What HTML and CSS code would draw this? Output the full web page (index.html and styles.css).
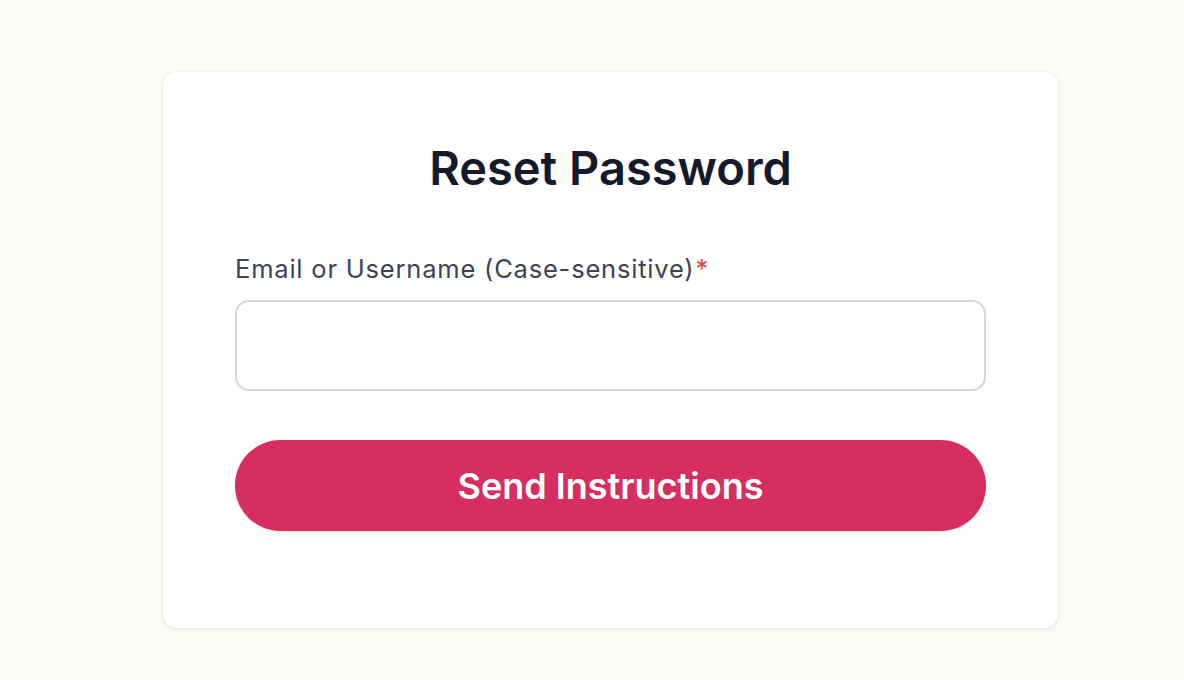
FILE: index.html
```html
<!DOCTYPE html>
<html lang="en">
<head>
<meta charset="utf-8">
<title>Reset Password</title>
<link rel="stylesheet" href="styles.css">
</head>
<body>
<main class="page">
  <section class="card">
    <h1 class="title">Reset Password</h1>
    <form class="form">
      <label class="label" for="user">Email or Username (Case-sensitive)<span class="req">*</span></label>
      <input class="input" id="user" type="text">
      <button class="btn" type="button">Send Instructions</button>
    </form>
  </section>
</main>
</body>
</html>
```
FILE: styles.css
```css
html, body {
  margin: 0;
  padding: 0;
  background: #fcfdf0;
  font-family: Inter, "Liberation Sans", sans-serif;
}
.page {
  padding: 72px 0 0 163px;
  min-height: 680px;
  box-sizing: border-box;
}
.card {
  width: 895px;
  height: 556px;
  box-sizing: border-box;
  background: #fff;
  border-radius: 14px;
  box-shadow: 0 1px 4px rgba(0,0,0,0.12);
  padding: 66px 72px 0;
}
.title {
  margin: 0;
  text-align: center;
  font-size: 47px;
  font-weight: 600;
  color: #141a2b;
  line-height: 60px;
}
.form {
  display: flex;
  flex-direction: column;
  margin-top: 55px;
}
.label {
  font-size: 25.5px;
  color: #3b4356;
  line-height: 32px;
  letter-spacing: 0.8px;
}
.req { color: #e0453a; margin-left: 1px; }
.input {
  margin-top: 15px;
  height: 91px;
  box-sizing: border-box;
  border: 2px solid #d3d5db;
  border-radius: 14px;
  background: #fff;
  font-size: 22px;
  padding: 0 20px;
}
.btn {
  margin-top: 49px;
  height: 91px;
  border: none;
  border-radius: 46px;
  background: #d52e5f;
  color: #fff;
  font-family: inherit;
  font-size: 36px;
  font-weight: 600;
  box-shadow: 0 1px 3px rgba(0,0,0,0.12);
}
```
